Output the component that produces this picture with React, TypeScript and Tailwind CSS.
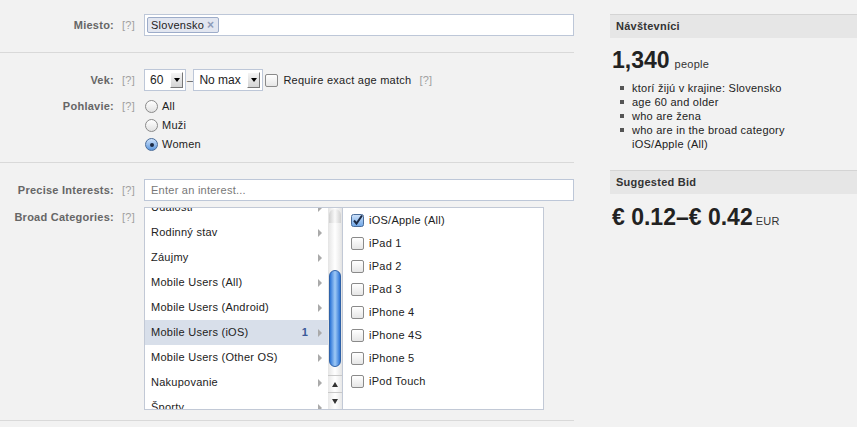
import type { ReactNode } from 'react';

const Help = () => <span className="ml-[8px] font-normal text-[#a0a0a0]">[?]</span>;

const Row = ({ label, children, labelClass = '' }: { label: string; children: ReactNode; labelClass?: string }) => (
  <div className="flex items-start">
    <div className={`w-[144px] shrink-0 pr-[9px] text-right font-bold text-[#666] ${labelClass}`}>
      {label}
      <Help />
    </div>
    <div className="flex-1">{children}</div>
  </div>
);

const SelectBox = ({ value, width }: { value: string; width: string }) => (
  <div className={`flex h-[22px] items-center border border-[#bdc7d8] bg-white pl-[5px] pr-[2px] ${width}`}>
    <span className="text-[12px] tracking-normal text-[#222]">{value}</span>
    <span className="ml-auto flex h-[16px] w-[13px] items-center justify-center border-r border-b border-[#777] border-t border-l border-t-white border-l-white bg-gradient-to-b from-[#f4f4f4] to-[#d4d4d4]">
      <span className="border-x-[3px] border-t-[4px] border-x-transparent border-t-black" />
    </span>
  </div>
);

const Checkbox = ({ checked = false }: { checked?: boolean }) =>
  checked ? (
    <svg width="13" height="13" viewBox="0 0 13 13" className="shrink-0">
      <defs>
        <linearGradient id="cb" x1="0" y1="0" x2="0" y2="1">
          <stop offset="0" stopColor="#cfe3fb" />
          <stop offset="1" stopColor="#6fa6e6" />
        </linearGradient>
      </defs>
      <rect x="0.5" y="0.5" width="12" height="12" rx="2" fill="url(#cb)" stroke="#4a6d9a" />
      <path d="M3 6.5 L5.5 9.5 L11 1.5" fill="none" stroke="#1c2b45" strokeWidth="2" />
    </svg>
  ) : (
    <span className="block h-[13px] w-[13px] shrink-0 rounded-[2px] border border-[#8a8a8a] bg-gradient-to-b from-white to-[#e6e6e6]" />
  );

const Radio = ({ checked = false }: { checked?: boolean }) =>
  checked ? (
    <span className="flex h-[13px] w-[13px] shrink-0 items-center justify-center rounded-full border border-[#4a6d9a] bg-gradient-to-b from-[#cfe3fb] to-[#5c97dd]">
      <span className="h-[4px] w-[4px] rounded-full bg-[#1c2b45]" />
    </span>
  ) : (
    <span className="block h-[13px] w-[13px] shrink-0 rounded-full border border-[#8a8a8a] bg-gradient-to-b from-white to-[#e2e2e2]" />
  );

const Arrow = () => <span className="ml-[10px] border-y-[4px] border-l-[4px] border-y-transparent border-l-[#aaa]" />;

const categories = [
  'Udalosti',
  'Rodinný stav',
  'Záujmy',
  'Mobile Users (All)',
  'Mobile Users (Android)',
  'Mobile Users (iOS)',
  'Mobile Users (Other OS)',
  'Nakupovanie',
  'Športy',
];

const devices = ['iOS/Apple (All)', 'iPad 1', 'iPad 2', 'iPad 3', 'iPhone 4', 'iPhone 4S', 'iPhone 5', 'iPod Touch'];

const SideHeader = ({ children }: { children: ReactNode }) => (
  <div className="flex h-[24px] items-center border-t border-[#d4d4d4] bg-[#e6e6e6] px-[6px] font-bold text-[#333]">
    {children}
  </div>
);

export default function App() {
  return (
    <div className="flex min-h-[427px] bg-[#f2f2f2] font-['Liberation_Sans',Arial,sans-serif] text-[11px] tracking-[0.25px] text-[#333]">
      <div className="w-[574px] shrink-0">
        {/* location */}
        <section className="border-b border-[#d9d9d9] pt-[14px] pb-[16px]">
          <Row label="Miesto:" labelClass="leading-[22px]">
            <div className="flex h-[22px] items-center border border-[#bdc7d8] bg-white pl-[2px]">
              <span className="flex h-[16px] items-center rounded-[2px] border border-[#9dacc9] bg-[#e2e6f0] pl-[3px] pr-[4px] text-[#222]">
                Slovensko
                <span className="ml-[3px] text-[12px] font-bold leading-none text-[#8d9bb8]">×</span>
              </span>
            </div>
          </Row>
        </section>

        {/* age + gender */}
        <section className="border-b border-[#d9d9d9] pt-[16px] pb-[8px]">
          <Row label="Vek:" labelClass="leading-[22px]">
            <div className="flex h-[22px] items-center">
              <SelectBox value="60" width="w-[42px]" />
              <span className="ml-[1px] text-[#555]">–</span>
              <SelectBox value="No max" width="w-[70px]" />
              <span className="ml-[2px]">
                <Checkbox />
              </span>
              <span className="ml-[5px] text-[#222]">Require exact age match</span>
              <Help />
            </div>
          </Row>
          <div className="mt-[6px]">
            <Row label="Pohlavie:" labelClass="leading-[19px]">
              {['All', 'Muži', 'Women'].map((g) => (
                <div key={g} className="flex h-[19px] items-center pl-[1px]">
                  <Radio checked={g === 'Women'} />
                  <span className="ml-[4px] text-[#222]">{g}</span>
                </div>
              ))}
            </Row>
          </div>
        </section>

        {/* interests */}
        <section className="border-b border-[#d9d9d9] pt-[16px] pb-[10px]">
          <Row label="Precise Interests:" labelClass="leading-[22px]">
            <div className="flex h-[22px] items-center border border-[#bdc7d8] bg-white pl-[6px] text-[#777]">
              Enter an interest...
            </div>
          </Row>
          <div className="mt-[6px]">
            <Row label="Broad Categories:" labelClass="pt-[3px] leading-[14px]">
              <div className="flex h-[203px] w-[400px] border border-[#c2c9d6] bg-white">
                <div className="w-[183px] shrink-0 overflow-hidden">
                  <div className="-mt-[13px]">
                    {categories.map((c) => (
                      <div
                        key={c}
                        className={`flex h-[25px] items-center pl-[6px] pr-[6px] text-[#222] ${
                          c === 'Mobile Users (iOS)' ? 'bg-[#d8dfea]' : ''
                        }`}
                      >
                        {c}
                        <span className="ml-auto font-bold text-[#3b5998]">{c === 'Mobile Users (iOS)' ? '1' : ''}</span>
                        <Arrow />
                      </div>
                    ))}
                  </div>
                </div>

                {/* aqua scrollbar */}
                <div className="flex w-[15px] shrink-0 flex-col border-r border-[#c2c9d6] bg-gradient-to-r from-[#e4e4e4] via-white to-[#e4e4e4]">
                  <div className="mx-[1px] mt-[1px] h-[14px] rounded-t-full bg-gradient-to-r from-[#d0d0d0] via-[#fafafa] to-[#d0d0d0]" />
                  <div className="flex-1 px-[1px] pt-[47px]">
                    <div className="h-[97px] rounded-full border border-[#2f62a8] bg-gradient-to-r from-[#2a74d6] via-[#9fcaf6] to-[#2a74d6]" />
                  </div>
                  <div className="flex h-[17px] items-center justify-center border-t border-[#c8c8c8] bg-gradient-to-r from-[#e8e8e8] via-white to-[#e8e8e8]">
                    <span className="border-x-[3px] border-b-[5px] border-x-transparent border-b-[#333]" />
                  </div>
                  <div className="flex h-[17px] items-center justify-center border-t border-[#c8c8c8] bg-gradient-to-r from-[#e8e8e8] via-white to-[#e8e8e8]">
                    <span className="border-x-[3px] border-t-[5px] border-x-transparent border-t-[#333]" />
                  </div>
                </div>

                <div className="flex-1 pt-[1px]">
                  {devices.map((d, i) => (
                    <div key={d} className="flex h-[23px] items-center pl-[8px]">
                      <Checkbox checked={i === 0} />
                      <span className="ml-[5px] text-[#222]">{d}</span>
                    </div>
                  ))}
                </div>
              </div>
            </Row>
          </div>
        </section>
      </div>

      {/* sidebar */}
      <aside className="ml-[36px] flex-1 pt-[14px]">
        <SideHeader>Návštevníci</SideHeader>
        <div className="mt-[8px] flex items-baseline px-[2px]">
          <span className="text-[23px] font-bold leading-[28px] tracking-normal text-[#222]">1,340</span>
          <span className="ml-[5px] text-[#333]">people</span>
        </div>
        <ul className="mt-[7px] pl-[10px] leading-[14px] text-[#222]">
          {['ktorí žijú v krajine: Slovensko', 'age 60 and older', 'who are žena'].map((t) => (
            <li key={t} className="flex">
              <span className="mt-[5px] mr-[8px] h-[4px] w-[4px] shrink-0 bg-[#555]" />
              {t}
            </li>
          ))}
          <li className="flex">
            <span className="mt-[5px] mr-[8px] h-[4px] w-[4px] shrink-0 bg-[#555]" />
            <span>
              who are in the broad category
              <br />
              iOS/Apple (All)
            </span>
          </li>
        </ul>
        <div className="mt-[19px]">
          <SideHeader>Suggested Bid</SideHeader>
        </div>
        <div className="mt-[9px] flex items-baseline px-[2px]">
          <span className="text-[23px] font-bold leading-[28px] tracking-normal text-[#222]">€ 0.12–€ 0.42</span>
          <span className="ml-[3px] text-[#333]">EUR</span>
        </div>
      </aside>
    </div>
  );
}
